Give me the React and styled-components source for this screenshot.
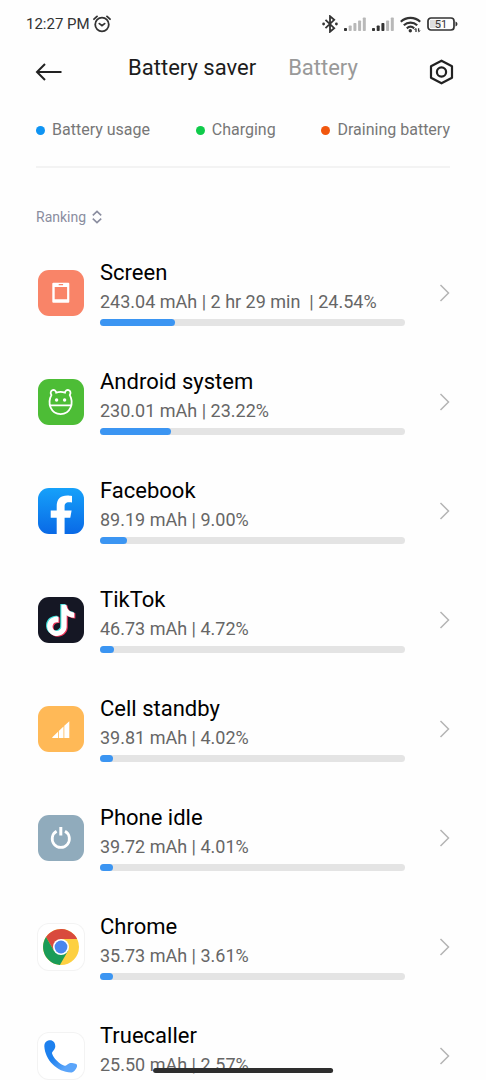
import styled, { createGlobalStyle } from "styled-components";

const GlobalStyle = createGlobalStyle`
  * {
    box-sizing: border-box;
  }

  body {
    margin: 0;
    background: #fefefe;
    font-family: Roboto, "Noto Sans", sans-serif;
  }

  button {
    border: 0;
    padding: 0;
    background: none;
    font: inherit;
    color: inherit;
    cursor: pointer;
  }

  svg {
    display: block;
    flex: none;
  }
`;

const Screen = styled.div`
  display: flex;
  flex-direction: column;
  height: 100vh;
  overflow: hidden;
`;

const StatusBar = styled.div`
  display: flex;
  justify-content: space-between;
  align-items: center;
  height: 48px;
  padding: 0 28px 0 26px;
  color: #333;
  font-size: 15px;
`;

const StatusGroup = styled.div`
  display: flex;
  align-items: center;
  gap: ${(props) => props.$gap};
`;

const Header = styled.header`
  display: grid;
  grid-template-columns: 1fr auto 1fr;
  align-items: center;
  height: 48px;
  padding: 0 32px;
`;

const IconButton = styled.button`
  justify-self: ${(props) => props.$side};
`;

const Tabs = styled.nav`
  display: flex;
  gap: 32px;
  padding-bottom: 8px;
`;

const Tab = styled.button`
  font-size: 22px;
  line-height: 28px;
  color: ${(props) => (props.$active ? "#1c1c1c" : "#999")};
`;

const Legend = styled.ul`
  display: flex;
  justify-content: space-between;
  margin: 0 36px;
  padding: 22px 0 24px;
  border-bottom: 2px solid #f3f3f3;
  list-style: none;
`;

const LegendItem = styled.li`
  display: flex;
  align-items: center;
  gap: 7px;
  font-size: 16px;
  line-height: 24px;
  color: #777;

  &::before {
    content: "";
    width: 9px;
    height: 9px;
    border-radius: 50%;
    background: ${(props) => props.$color};
  }
`;

const SortButton = styled.button`
  display: flex;
  align-items: center;
  align-self: flex-start;
  gap: 6px;
  margin: 38px 36px 10px;
  font-size: 14px;
  line-height: 22px;
  color: #8a8d9f;
`;

const List = styled.ul`
  flex: 1;
  min-height: 0;
  margin: 0;
  padding: 0;
  list-style: none;
  overflow-y: auto;
  scrollbar-width: none;
`;

const Row = styled.button`
  display: flex;
  align-items: center;
  width: 100%;
  height: 109px;
  padding: 0 36px 0 38px;
  text-align: left;
`;

const AppIcon = styled.svg`
  width: 46px;
  height: 46px;
  border-radius: 11px;
  background: ${(props) => props.$bg};
  box-shadow: ${(props) => (props.$outlined ? "0 0 0 1px #f3f3f3" : "none")};
`;

const Info = styled.div`
  flex: 1;
  min-width: 0;
  margin: 0 34px 0 16px;
`;

const Name = styled.div`
  font-size: 22px;
  line-height: 28px;
  color: #000;
`;

const Details = styled.div`
  margin-top: 3px;
  font-size: 18px;
  line-height: 24px;
  color: #666;
  white-space: pre;
`;

const Track = styled.div`
  height: 7px;
  margin-top: 5px;
  border-radius: 4px;
  background: #e4e4e4;
`;

const Fill = styled.div`
  min-width: 13px;
  height: 100%;
  border-radius: 4px;
  background: #3b95f2;
`;

const HomeIndicator = styled.div`
  position: fixed;
  bottom: 7px;
  left: 50%;
  width: 37%;
  height: 5px;
  border-radius: 3px;
  background: #2e2e2e;
  transform: translateX(-50%);
`;

function AlarmIcon() {
  return (
    <svg width="18" height="18" viewBox="0 0 18 18" fill="none" stroke="#333" strokeWidth="1.8" strokeLinecap="round">
      <circle cx="9" cy="9.5" r="6.8" />
      <path d="M6.4 8.6 9 10.6l2.600-2M1 4.2 4 1.4M17 4.2 14 1.4" />
    </svg>
  );
}

function BluetoothIcon() {
  return (
    <svg width="16" height="18" viewBox="0 0 16 18" fill="none" stroke="#333" strokeWidth="1.8">
      <path d="m3.5 4.8 8.7 8.4L8 16.800V1.200l4.200 3.600-8.700 8.400" />
      <circle cx="1.6" cy="9" r="1.4" fill="#333" stroke="none" />
      <circle cx="14.4" cy="9" r="1.4" fill="#333" stroke="none" />
    </svg>
  );
}

function SignalIcon({ level }) {
  const bars = [3, 5.5, 8, 10.5, 13.5];
  return (
    <svg width="22" height="14" viewBox="0 0 22 14">
      {bars.map((height, i) => (
        <rect
          key={height}
          x={i * 4.7}
          y={14 - height}
          width="3"
          height={height}
          rx="0.8"
          fill={i < level ? "#333" : "#b8b8b8"}
        />
      ))}
    </svg>
  );
}

function WifiIcon() {
  return (
    <svg width="21" height="17" viewBox="0 0 21 17" fill="none" stroke="#333" strokeWidth="2.200">
      <path d="M.8 5.800C6.300.6 14.700.6 20.200 5.800M3.800 9.200c3.900-3.500 9.500-3.500 13.400 0M6.800 12.300c2.200-1.900 5.200-1.900 7.400 0" />
      <circle cx="10.300" cy="14.700" r="1.700" fill="#333" stroke="none" />
      <path d="M16 12.800v3.200M18.600 12.200v3.200" strokeWidth="1.300" />
      <path d="m14.500 14 1.500-1.800M20 14.400l-1.400 1.800" strokeWidth="1" />
    </svg>
  );
}

function BatteryIcon() {
  return (
    <svg width="31" height="14" viewBox="0 0 31 14">
      <rect x="3" y="3" width="11" height="8" fill="#dedede" />
      <rect x="1" y="1" width="26" height="12" rx="3" fill="none" stroke="#333" strokeWidth="1.700" />
      <path d="M28.500 4.500c2.600.7 2.600 4.300 0 5z" fill="#333" />
      <text x="14" y="10.800" fontSize="11" textAnchor="middle" fill="#333">
        51
      </text>
    </svg>
  );
}

function BackIcon() {
  return (
    <svg width="32" height="28" viewBox="0 0 32 28" fill="none" stroke="#222" strokeWidth="2">
      <path d="M29.500 14H5.500M13 6l-8 8 8 8" />
    </svg>
  );
}

function SettingsIcon() {
  return (
    <svg width="26" height="26" viewBox="0 0 26 26" fill="none" stroke="#222" strokeWidth="2.200" strokeLinejoin="round">
      <path d="M13.500 1.700 24 7.300v11.400l-10.500 5.600L3 18.700V7.300z" />
      <circle cx="13.500" cy="13" r="4.600" />
    </svg>
  );
}

function SortIcon() {
  return (
    <svg width="10" height="14" viewBox="0 0 10 14" fill="none" stroke="#8a8d9f" strokeWidth="1.600">
      <path d="M.8 5.300 5 1.400l4.200 3.900M.8 8.700 5 12.600l4.200-3.900" />
    </svg>
  );
}

function ChevronIcon() {
  return (
    <svg width="11" height="18" viewBox="0 0 11 18" fill="none" stroke="#b4b4b4" strokeWidth="1.500">
      <path d="m1.500 1 8 8-8 8" />
    </svg>
  );
}

const noteShape =
  "M12.525.02c1.31-.02 2.61-.01 3.91-.02.08 1.53.63 3.09 1.75 4.17 1.12 1.11 2.7 1.62 4.24 1.79v4.03c-1.44-.05-2.89-.35-4.2-.97-.57-.26-1.1-.59-1.62-.93-.01 2.92.01 5.84-.02 8.75-.08 1.4-.54 2.79-1.35 3.94-1.31 1.92-3.58 3.17-5.91 3.21-1.43.08-2.86-.31-4.08-1.03-2.02-1.19-3.44-3.37-3.65-5.71-.02-.5-.03-1-.01-1.49.18-1.9 1.12-3.72 2.58-4.96 1.66-1.44 3.98-2.13 6.15-1.72.02 1.48-.04 2.96-.04 4.44-.99-.32-2.15-.23-3.02.37-.63.41-1.11 1.04-1.36 1.75-.21.51-.15 1.07-.14 1.61.24 1.64 1.82 3.02 3.5 2.87 1.12-.01 2.19-.66 2.77-1.61.19-.33.4-.67.41-1.06.1-1.79.06-3.57.07-5.36.01-4.03-.01-8.05.02-12.07z";

const apps = [
  {
    name: "Screen",
    details: "243.04 mAh | 2 hr 29 min  | 24.54%",
    percent: 24.54,
    bg: "#f98468",
    icon: (
      <path
        fill="#fff"
        fillRule="evenodd"
        d="M15.300 12.800h15q1 0 1 1v18q0 1-1 1h-15q-1 0-1-1v-18q0-1 1-1zM16.700 17v12.300h12.400V17zM20.700 14v1.300h4.400V14z"
      />
    ),
  },
  {
    name: "Android system",
    details: "230.01 mAh | 23.22%",
    percent: 23.22,
    bg: "#4dbd36",
    icon: (
      <g fill="none" stroke="#fff" strokeWidth="1.800">
        <path d="M18.200 13.600c2.800-1 6-1 8.800 0 .3-2 1.800-3 3.600-2.400 2 .7 2.500 2.900 1.200 4.900 4.500 8.200.5 19.100-9.200 19.100s-13.700-10.900-9.200-19.100c-1.300-2-.8-4.200 1.200-4.900 1.800-.6 3.300.4 3.600 2.400z" />
        <path d="M11.300 26.300h22.600" />
        <circle cx="18.600" cy="21" r="1.700" fill="#fff" stroke="none" />
        <circle cx="26.600" cy="21" r="1.700" fill="#fff" stroke="none" />
      </g>
    ),
  },
  {
    name: "Facebook",
    details: "89.19 mAh | 9.00%",
    percent: 9,
    bg: "linear-gradient(#16a1fa, #0969e6)",
    icon: (
      <path
        fill="#fff"
        d="M18.700 46V29.800h-6v-7.200h6v-3.800c0-7.600 3.400-11.200 10.800-11.200 1.500 0 3.300.2 4.500.5v6.300c-.8-.1-1.900-.2-3-.2-3.300 0-4.400 1.500-4.400 4.600v3.800h7l-1.300 7.200h-5.700V46z"
      />
    ),
  },
  {
    name: "TikTok",
    details: "46.73 mAh | 4.72%",
    percent: 4.72,
    bg: "#151724",
    icon: (
      <>
        <path d={noteShape} fill="#3de0dc" transform="translate(6 7) scale(1.300)" />
        <path d={noteShape} fill="#f0355b" transform="translate(8.200 8.600) scale(1.300)" />
        <path d={noteShape} fill="#fff" transform="translate(7.100 7.800) scale(1.300)" />
      </>
    ),
  },
  {
    name: "Cell standby",
    details: "39.81 mAh | 4.02%",
    percent: 4.02,
    bg: "#ffb957",
    icon: <path fill="#fff" d="M14.300 32v-.8l5.700-5.500V32zM20.800 32v-7l4.700-4.500V32zM26.300 32V19.800l5-4.600V32z" />,
  },
  {
    name: "Phone idle",
    details: "39.72 mAh | 4.01%",
    percent: 4.01,
    bg: "#90abbc",
    icon: (
      <g fill="none" stroke="#fff" strokeWidth="2.800">
        <path d="M18.600 16.300a8.600 8.600 0 1 0 8.400 0" />
        <path d="M22.800 12v8.500" strokeWidth="3" />
      </g>
    ),
  },
  {
    name: "Chrome",
    details: "35.73 mAh | 3.61%",
    percent: 3.61,
    bg: "#fff",
    outlined: true,
    icon: (
      <>
        <circle cx="23" cy="23" r="18" fill="#fdd041" />
        <path fill="#d94a3d" d="M23 15h16.100A18 18 0 0 0 8 13.100L16.100 27 23 23z" />
        <path fill="#1a9c58" d="M16.100 27 8 13.100a18 18 0 0 0 13.900 27.800l8-13.900z" />
        <circle cx="23" cy="23" r="8" fill="#fff" />
        <circle cx="23" cy="23" r="6.400" fill="#4a86ee" />
      </>
    ),
  },
  {
    name: "Truecaller",
    details: "25.50 mAh | 2.57%",
    percent: 2.57,
    bg: "#fff",
    outlined: true,
    icon: (
      <>
        <linearGradient id="handset" x1="0" y1="0" x2="1" y2="1">
          <stop offset="0.4" stopColor="#1d80ee" />
          <stop offset="0.75" stopColor="#5ba5fa" />
        </linearGradient>
        <path
          fill="url(#handset)"
          d="M11 7.300C8 8 6.200 10 6.300 13 7 27 19 39 33 39.600c2.500 0 5-3 6-6.100.6-2.500-1-3-5-3.500s-5.300 3-7.500 2.800C22 31.500 15 25 14 20.300c0-2 3-3.300 3.300-6.800.2-4.500-3.100-7-6.300-6.200z"
        />
      </>
    ),
  },
];

function AppRow({ app }) {
  return (
    <li>
      <Row type="button">
        <AppIcon viewBox="0 0 46 46" $bg={app.bg} $outlined={app.outlined} aria-hidden="true">
          {app.icon}
        </AppIcon>
        <Info>
          <Name>{app.name}</Name>
          <Details>{app.details}</Details>
          <Track>
            <Fill style={{ width: `${app.percent}%` }} />
          </Track>
        </Info>
        <ChevronIcon />
      </Row>
    </li>
  );
}

function App() {
  return (
    <Screen>
      <GlobalStyle />
      <StatusBar>
        <StatusGroup $gap="3px">
          <span>12:27 PM</span>
          <AlarmIcon />
        </StatusGroup>
        <StatusGroup $gap="6px">
          <BluetoothIcon />
          <SignalIcon level={1} />
          <SignalIcon level={3} />
          <WifiIcon />
          <BatteryIcon />
        </StatusGroup>
      </StatusBar>

      <Header>
        <IconButton type="button" $side="start" aria-label="Back">
          <BackIcon />
        </IconButton>
        <Tabs>
          <Tab type="button" $active>
            Battery saver
          </Tab>
          <Tab type="button">Battery</Tab>
        </Tabs>
        <IconButton type="button" $side="end" aria-label="Settings">
          <SettingsIcon />
        </IconButton>
      </Header>

      <Legend>
        <LegendItem $color="#0f94f3">Battery usage</LegendItem>
        <LegendItem $color="#0fcb4a">Charging</LegendItem>
        <LegendItem $color="#f1570e">Draining battery</LegendItem>
      </Legend>

      <SortButton type="button">
        Ranking
        <SortIcon />
      </SortButton>

      <List>
        {apps.map((app) => (
          <AppRow key={app.name} app={app} />
        ))}
      </List>

      <HomeIndicator />
    </Screen>
  );
}

export default App;
